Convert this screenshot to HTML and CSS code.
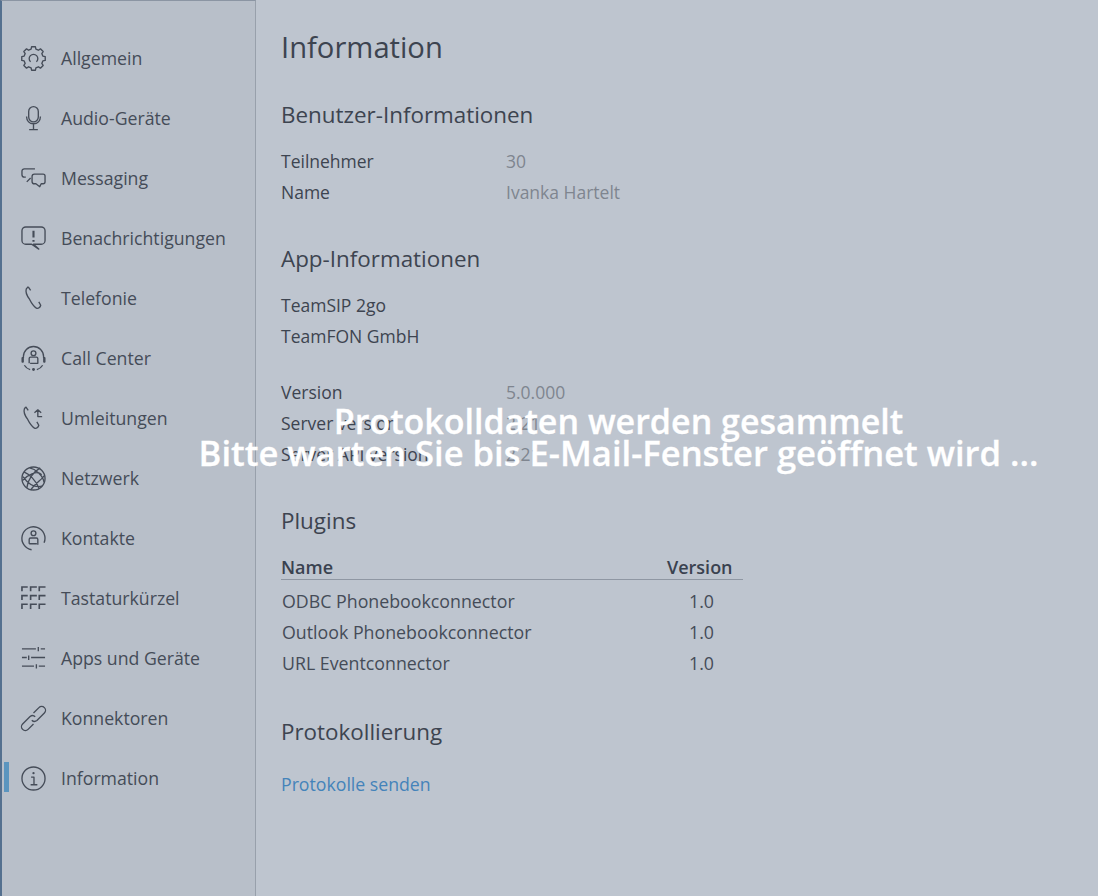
FILE: index.html
```html
<!DOCTYPE html>
<html lang="de">
<head>
<meta charset="utf-8">
<title>Information</title>
<link rel="stylesheet" href="styles.css">
</head>
<body>
<div class="app">
  <nav class="sidebar">
    <a class="nav-item"><svg class="icon" viewBox="0 0 26 26"><path d="M10.5 3.300 11 .8h4l.5 2.500 2.590 1.070 2.120-1.410 2.830 2.830-1.410 2.120 1.070 2.590 2.500.5v4l-2.500.5-1.070 2.590 1.410 2.120-2.830 2.830-2.120-1.410-2.590 1.070-.5 2.500h-4l-.5-2.500-2.590-1.070-2.120 1.410-2.830-2.830 1.410-2.120L3.300 15.500.8 15v-4l2.500-.5 1.070-2.590-1.410-2.120 2.830-2.830 2.120 1.410z"/><path d="M10 16.500a4.500 4.500 0 1 1 6 0"/></svg><span>Allgemein</span></a>
    <a class="nav-item"><svg class="icon" viewBox="0 0 26 26"><rect x="8" y=".7" width="10" height="15.800" rx="5"/><path d="M5.800 11c0 4.500 3 7.500 7.200 7.500s7.200-3 7.200-7.500M13 18.500v5.500M8.500 24.500h9"/></svg><span>Audio-Geräte</span></a>
    <a class="nav-item"><svg class="icon" viewBox="0 0 26 26"><path d="M14.500 3H3.500A2.500 2.500 0 0 0 1 5.500V9a2.500 2.500 0 0 0 2.500 2.500H5M6 16.500l4-4"/><path d="M14 8.500h9a2 2 0 0 1 2 2v6a2 2 0 0 1-2 2h-2l-1.500 3-4-3H14a2.500 2.500 0 0 1-2.500-2.500v-5A2.500 2.500 0 0 1 14 8.500z"/></svg><span>Messaging</span></a>
    <a class="nav-item"><svg class="icon" viewBox="0 0 26 26"><path d="M5 1h16a4 4 0 0 1 4 4v10a4 4 0 0 1-4 4h-8l5.500 5-7.500-5H5a4 4 0 0 1-4-4V5a4 4 0 0 1 4-4z"/><path class="heavy" d="M13 5v7M13 14.500v2"/></svg><span>Benachrichtigungen</span></a>
    <a class="nav-item"><svg class="icon" viewBox="0 0 26 26"><path d="M7.500.8 5.500 3C4.500 6 6 10 9 14c2 4 4 7 7 9 2 1 4-1 4.500-3l-2-3.500M7.500.8 10 4.500"/></svg><span>Telefonie</span></a>
    <a class="nav-item"><svg class="icon" viewBox="0 0 26 26"><path d="M2.500 12.500V11a10.500 10.500 0 0 1 21 0v1.500"/><rect class="solid" x=".5" y="11.500" width="2.500" height="6" rx="1"/><rect class="solid" x="23" y="11.500" width="2.500" height="6" rx="1"/><circle cx="13" cy="7.500" r="2.500"/><path d="M8.500 18v-5c0-1 .5-1.500 1.500-1.500h6c1 0 1.500.5 1.500 1.500v5h-8"/><path d="M3.500 20c1.500 2.500 3.500 3.800 6 4.500M22.500 20c-1.500 2.500-3.500 3.800-6 4.500"/><circle class="solid" cx="13" cy="24.500" r="1.500"/></svg><span>Call Center</span></a>
    <a class="nav-item"><svg class="icon" viewBox="0 0 26 26"><path d="M5 .8 3.500 3C2.500 6 4 10 7 14c2 4 4 7 7 9 2 1 4-1 4.500-3l-2-3.500M5 .8 7.500 4.500"/><path d="M14 7l3.500-3L21 7M17.500 4.500V11H22"/></svg><span>Umleitungen</span></a>
    <a class="nav-item"><svg class="icon" viewBox="0 0 26 26"><circle cx="13" cy="13" r="12"/><path d="M3 6c5 2 13 9 16 18M1.500 15c6-6 15-11 20-6M6 23c1-9 7-17 14-21M9 2c6 1 14 8 15 15M2 11c5 7 12 12 20 10M10 25c5-7 13-12 14-15"/></svg><span>Netzwerk</span></a>
    <a class="nav-item"><svg class="icon" viewBox="0 0 26 26"><path d="M11 24.700A12 12 0 1 1 24 17.500"/><circle cx="13" cy="7.500" r="2.500"/><path d="M8.500 18.500V14c0-1 .5-1.500 1.500-1.500h6c1 0 1.500.5 1.500 1.500v5.500M8.500 18.500h8"/></svg><span>Kontakte</span></a>
    <a class="nav-item"><svg class="icon thick" viewBox="0 0 26 26"><path d="M1 5.500V1h6M10 5.500V1h6.500M19 5.500V1h6.500M1 14.500V10h6M10 14.500V10h6.500M19 14.500V10h6.500M1 24V19h6M10 24V19h6.500M19 24V19h6.500"/></svg><span>Tastaturkürzel</span></a>
    <a class="nav-item"><svg class="icon" viewBox="0 0 26 26"><path d="M1 3h14.500M18 1v4.500M20.500 3H25M1 12h5M8 10v4.500M10.500 12H25M1 21h12.500M16 19v4.500M18.500 21H25"/></svg><span>Apps und Geräte</span></a>
    <a class="nav-item"><svg class="icon" viewBox="0 0 26 26"><g transform="rotate(-45 13 13)"><path d="M9 17H1a4 4 0 0 1 0-8H12a4 4 0 0 1 3.500 4"/><path d="M17 9h8a4 4 0 0 1 0 8H14a4 4 0 0 1-3.500-4"/></g></svg><span>Konnektoren</span></a>
    <a class="nav-item active"><svg class="icon" viewBox="0 0 26 26"><circle cx="13" cy="13" r="12"/><circle class="solid" cx="13" cy="7.500" r="1.200"/><path d="M10.500 11.500H13.500V19M10 19.500h7"/></svg><span>Information</span></a>
  </nav>
  <main class="content">
    <h1>Information</h1>

    <section class="sec sec-user">
      <h2>Benutzer-Informationen</h2>
      <dl class="rows">
        <div class="row"><dt>Teilnehmer</dt><dd>30</dd></div>
        <div class="row"><dt>Name</dt><dd>Ivanka Hartelt</dd></div>
      </dl>
    </section>

    <section class="sec sec-app">
      <h2>App-Informationen</h2>
      <div class="rows">
        <div class="row"><dt>TeamSIP 2go</dt></div>
        <div class="row"><dt>TeamFON GmbH</dt></div>
      </div>
      <dl class="rows rows-version">
        <div class="row"><dt>Version</dt><dd>5.0.000</dd></div>
        <div class="row"><dt>Server version</dt><dd>2.21</dd></div>
        <div class="row"><dt>Server API version</dt><dd>2.21</dd></div>
      </dl>
    </section>

    <section class="sec sec-plugins">
      <h2>Plugins</h2>
      <table class="plugins">
        <thead><tr><th class="c-name">Name</th><th class="c-ver">Version</th></tr></thead>
        <tbody>
          <tr><td class="c-name">ODBC Phonebookconnector</td><td class="c-ver">1.0</td></tr>
          <tr><td class="c-name">Outlook Phonebookconnector</td><td class="c-ver">1.0</td></tr>
          <tr><td class="c-name">URL Eventconnector</td><td class="c-ver">1.0</td></tr>
        </tbody>
      </table>
    </section>

    <section class="sec sec-log">
      <h2>Protokollierung</h2>
      <a class="link">Protokolle senden</a>
    </section>
  </main>
</div>
<div class="overlay">
  <p class="overlay-title">Protokolldaten werden gesammelt</p>
  <p>Bitte warten Sie bis E-Mail-Fenster geöffnet wird ...</p>
</div>
</body>
</html>
```
FILE: styles.css
```css
* { box-sizing: border-box; }
html, body { margin: 0; height: 100%; }
body {
  background: #bec5cf;
  color: #3d4450;
  font-family: "Open Sans", "Noto Sans", sans-serif;
  font-size: 17.5px;
  overflow: hidden;
}
.app { display: flex; height: 896px; }
.sidebar {
  width: 256px;
  flex: none;
  background: #b8bfc9;
  border-left: 2px solid #54708f;
  border-right: 1px solid #98a0ab;
  border-top: 1px solid #8b95a3;
  padding-top: 27px;
  display: flex;
  flex-direction: column;
}
.nav-item {
  height: 60px;
  display: flex;
  align-items: center;
  gap: 15px;
  padding-left: 19px;
  position: relative;
  color: #454c58;
  font-size: 17.7px;
}
.nav-item.active::before {
  content: "";
  position: absolute;
  left: 2px;
  top: 14px;
  width: 5px;
  height: 30px;
  background: #5b95bf;
}
.icon {
  width: 25px;
  height: 25px;
  flex: none;
  fill: none;
  stroke: #454c58;
  stroke-width: 1.4;
  stroke-linejoin: round;
  overflow: visible;
}
.icon.thick { stroke-width: 1.7; stroke-linejoin: miter; }
.icon .solid { fill: #454c58; stroke: none; }
.icon .heavy { stroke-width: 2.2; }
.content { flex: 1; padding: 0 0 0 25px; }
h1 {
  margin: 27px 0 0;
  font-size: 29.2px;
  line-height: 40px;
  font-weight: 400;
  color: #3d4450;
}
h2 {
  margin: 0;
  font-size: 22.4px;
  line-height: 30px;
  font-weight: 400;
  color: #3d4450;
}
.sec-user { margin-top: 33px; }
.sec-app { margin-top: 37px; }
.sec-plugins { margin-top: 37px; }
.sec-log { margin-top: 39px; }
.rows { margin: 15px 0 0; }
.rows-version { margin-top: 25px; }
.row { display: flex; height: 31px; align-items: center; }
dt { width: 225px; }
dd { margin: 0; color: #7f858f; }
.plugins {
  margin-top: 19px;
  width: 462px;
  border-collapse: separate;
  border-spacing: 0;
  font-size: 17.8px;
}
th {
  font-weight: 600;
  font-size: 18px;
  height: 25px;
  line-height: 24px;
  padding: 0;
  vertical-align: top;
  border-bottom: 1px solid #8f97a3;
  color: #3a4250;
}
td { height: 31px; padding: 0; color: #454c58; }
.plugins tbody tr:first-child td { padding-top: 5px; height: 36px; }
th.c-name { text-align: left; }
td.c-name { padding-left: 1px; }
th.c-ver { width: 76px; text-align: left; }
td.c-ver { padding-left: 22px; }
.link { display: block; margin-top: 22px; color: #4483ba; line-height: 31px; font-size: 17.7px; }
.overlay {
  position: absolute;
  left: 0;
  right: 0;
  top: 405px;
  text-align: center;
  color: #fff;
  font-size: 34.6px;
  font-weight: 600;
  line-height: 32px;
  padding-left: 139px;
  -webkit-text-stroke: 0.3px #fff;
}
.overlay p { margin: 0; }
.overlay .overlay-title { font-size: 34px; }
```
